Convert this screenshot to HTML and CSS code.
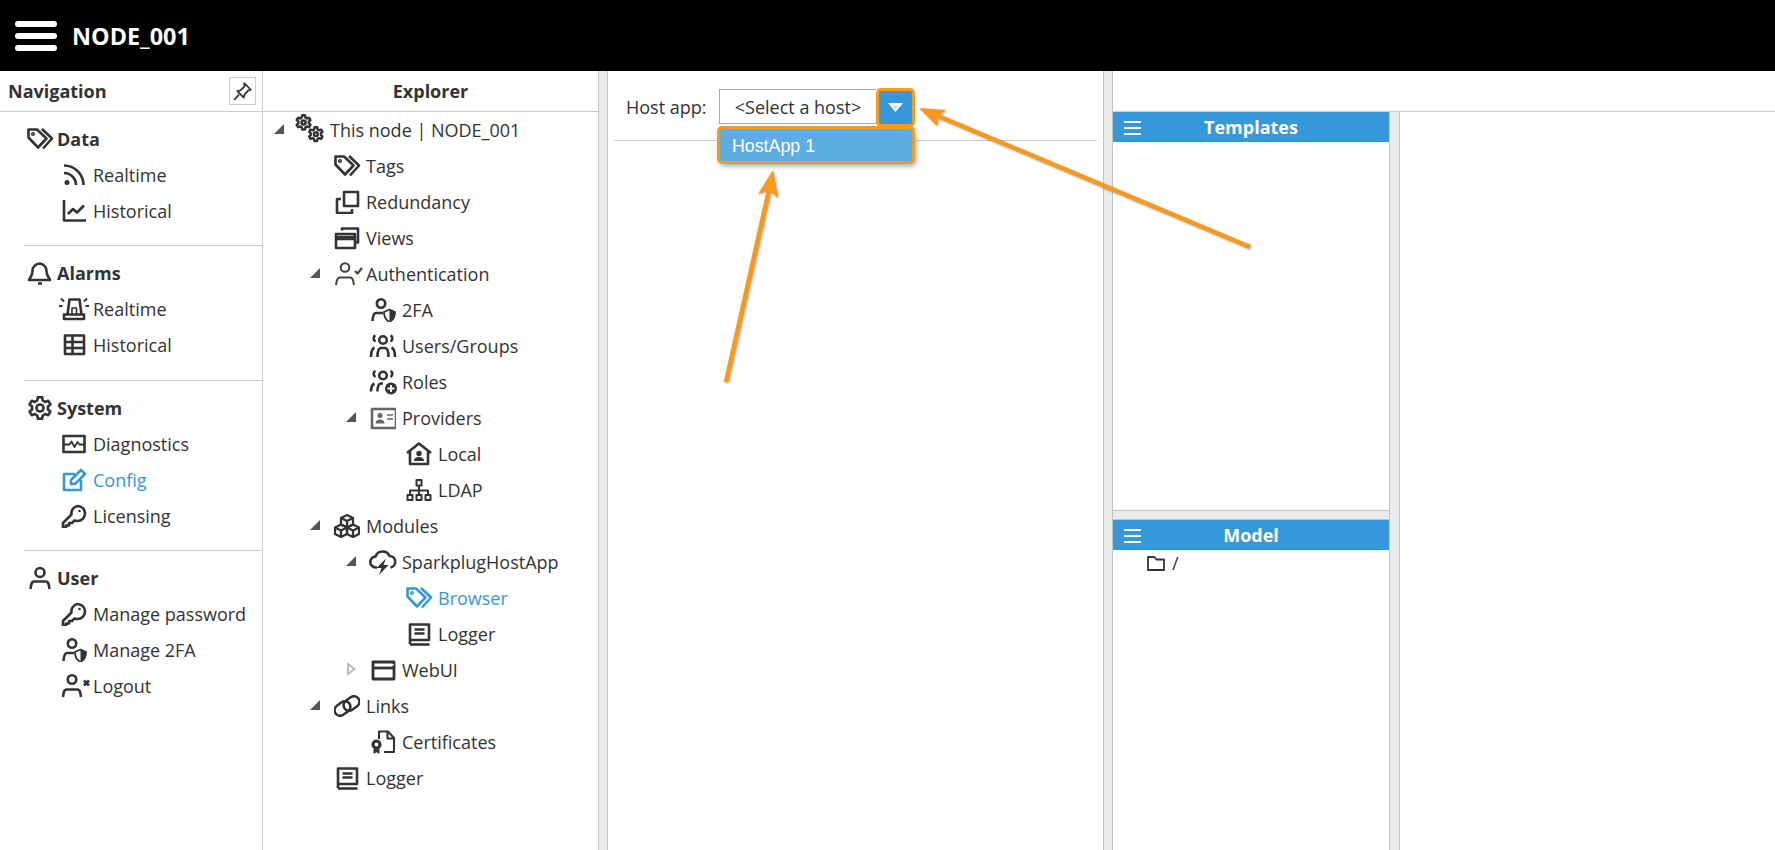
FILE: index.html
```html
<!DOCTYPE html>
<html lang="en">
<head>
<meta charset="utf-8">
<title>NODE_001</title>
<link rel="stylesheet" href="styles.css">
</head>
<body>
<svg class="defs" aria-hidden="true">
  <defs>
    <polygon id="gear" points="10.9,1.2 15.1,1.2 15.7,4.5 18.1,5.9 21.3,4.8 23.4,8.4 20.9,10.6 20.9,13.4 23.4,15.6 21.3,19.2 18.1,18.1 15.7,19.5 15.1,22.8 10.9,22.8 10.3,19.5 7.9,18.1 4.7,19.2 2.6,15.6 5.1,13.4 5.1,10.6 2.6,8.4 4.7,4.8 7.9,5.9 10.3,4.5"/>
    <symbol id="i-tags" viewBox="0 0 26 24" overflow="visible"><path d="M1.500 2.500h8.500l9.500 9-8.500 9L1.500 10.500z"/><circle cx="6" cy="7" r="1.300" stroke-width="1.500"/><path d="M15 2l10 9.500-9 10"/></symbol>
    <symbol id="i-rss" viewBox="0 0 26 24"><circle cx="6" cy="19.500" r="2.500" fill="currentColor" stroke="none"/><path d="M3 10a12 12 0 0 1 12 12M3 2.500a19.500 19.500 0 0 1 19.500 19.500"/></symbol>
    <symbol id="i-chart" viewBox="0 0 26 24"><path d="M3 1v20.500h22"/><path d="M7 15l5-5 4 3.500 7-7"/></symbol>
    <symbol id="i-bell" viewBox="0 0 26 24"><path d="M13 2.500a7.500 7.500 0 0 0-7.500 7.500c0 6-3.500 7.500-3.500 9h21c0-1.500-3.500-3-3.500-9A7.500 7.500 0 0 0 13 2.500z"/><path d="M11 22.500h4"/></symbol>
    <symbol id="i-siren" viewBox="0 0 26 24" overflow="visible"><path d="M3 17.500h20v4.500H3z"/><path d="M6.500 17.500l2-15h10l2 15"/><path d="M11 17v-6h4.500v6" stroke-width="1.600"/><path d="M-2 9h3.500M24.500 9H28M0 1.500l3 3M26 1.500l-3 3" stroke-width="2"/></symbol>
    <symbol id="i-table" viewBox="0 0 26 24"><rect x="4" y="2.500" width="19" height="18.500"/><path d="M4 9h19M4 15h19M11.500 2.500V21"/></symbol>
    <symbol id="i-monitor" viewBox="0 0 26 24"><rect x="2.500" y="4" width="21" height="16"/><path d="M2.500 12.500h6l2-3 3 5.500 3-5 2 2.500h5" stroke-width="1.800"/></symbol>
    <symbol id="i-edit" viewBox="0 0 26 24"><path d="M20 12v10H3V6h11"/><path d="M10 16v-4l10-10 4 4-10 10z"/></symbol>
    <symbol id="i-key" viewBox="0 0 26 24"><path d="M16.500 2a7.500 7.500 0 0 1 0 15c-1 0-2-.2-3-.5l-2.500 2.500H8v2.500H5v2H2v-4.500l8.500-8.500A7.500 7.500 0 0 1 16.500 2z"/><circle cx="18.500" cy="7" r="1.300" fill="currentColor" stroke="none"/></symbol>
    <symbol id="i-user" viewBox="0 0 26 24"><circle cx="13" cy="6.500" r="4.500"/><path d="M3.500 23c.5-4 1-7.500 3.500-7.500h12c2.500 0 3 3.500 3.500 7.500"/></symbol>
    <symbol id="i-usershield" viewBox="0 0 26 24"><circle cx="11" cy="5.500" r="4.200"/><path d="M2.500 23c.3-4 .8-8 3.500-8h7"/><path d="M14 14l5.500-2.500L25 14c0 5-1.700 8-5.500 10-3.800-2-5.500-5-5.500-10z" stroke-width="1.800"/><path d="M19.500 11.500L25 14c0 5-1.700 8-5.500 10z" fill="currentColor" stroke="none"/></symbol>
    <symbol id="i-userx" viewBox="0 0 26 24" overflow="visible"><circle cx="11" cy="5.500" r="4.300"/><path d="M2 23c.5-4 1-7.500 3.500-7.500h11c2.500 0 3 3.500 3.500 7.500"/><path d="M23 6.500l5 5M28 6.500l-5 5"/></symbol>
    <symbol id="i-usercheck" viewBox="0 0 26 24" overflow="visible"><circle cx="11" cy="5.500" r="4.300"/><path d="M2 23c.5-4 1-7.500 3.500-7.500h11c2.500 0 3 3.500 3.500 7.500"/><path d="M21 9l2.500 2.500L28 6"/></symbol>
    <symbol id="i-cogs" viewBox="0 0 26 24" overflow="visible"><g transform="translate(-3 -3.500) scale(.66)" stroke-width="3.800"><use href="#gear"/><circle cx="13" cy="12" r="3"/></g><g transform="translate(9.500 8.500) scale(.64)" stroke-width="3.800"><use href="#gear"/><circle cx="13" cy="12" r="3"/></g></symbol>
    <symbol id="i-cog" viewBox="0 0 26 24"><use href="#gear"/><circle cx="13" cy="12" r="3.500"/></symbol>
    <symbol id="i-clone" viewBox="0 0 26 24"><rect x="10" y="2" width="14" height="14"/><path d="M7 9H3v14h15v-4"/></symbol>
    <symbol id="i-restore" viewBox="0 0 26 24"><path d="M8 4.500V2.500h16v14h-3"/><rect x="2" y="8" width="19" height="14"/><path d="M2 12h19" stroke-width="4.500"/></symbol>
    <symbol id="i-users" viewBox="0 0 26 24" overflow="visible"><circle cx="13" cy="6" r="3.800"/><path d="M5.500 1.500C3 2.500 3 6 5.500 7.500M20.500 1.500c2.500 1 2.500 4.500 0 6"/><path d="M7.500 23c0-4 .7-9 3.500-9h4c2.800 0 3.500 5 3.500 9"/><path d="M1 23c0-4 .5-8 3.500-9.500M25 23c0-4-.5-8-3.500-9.500"/></symbol>
    <symbol id="i-usersplus" viewBox="0 0 26 24" overflow="visible"><circle cx="13" cy="5.500" r="3.800"/><path d="M5.500 1C3 2 3 5.500 5.500 7M20.500 1c2.500 1 2.500 4.500 0 6"/><path d="M7.500 21.500c0-3 .7-8 3.500-8h2"/><path d="M1 21.500c0-3 .5-6.500 3.500-8"/><circle cx="21" cy="18.500" r="6" fill="currentColor" stroke="none"/><path d="M21 15v7M17.500 18.500h7" stroke="#fff" stroke-width="1.800"/></symbol>
    <symbol id="i-idcard" viewBox="0 0 26 24"><rect x="2" y="3" width="24" height="19"/><circle cx="10" cy="9.500" r="2.500" fill="currentColor" stroke="none"/><path d="M5.500 17.500c0-3 2-4 4.500-4s4.500 1 4.500 4z" fill="currentColor" stroke="none"/><path d="M17 9h6M17 13h6" stroke-width="1.700"/></symbol>
    <symbol id="i-house" viewBox="0 0 26 24"><path d="M1 11L13 1.500 25 11"/><path d="M4 9v13h18V9"/><circle cx="13" cy="11.500" r="2.700" fill="currentColor" stroke="none"/><path d="M8 19c0-3 2.500-4 5-4s5 1 5 4z" fill="currentColor" stroke="none"/></symbol>
    <symbol id="i-sitemap" viewBox="0 0 26 24" stroke-width="2"><rect x="10.500" y="2" width="5" height="5.500"/><rect x="1.500" y="17" width="5" height="5"/><rect x="10.500" y="17" width="5" height="5"/><rect x="19.500" y="17" width="5" height="5"/><path d="M13 7v10M4 17v-4.500h18V17"/></symbol>
    <symbol id="i-cubes" viewBox="0 0 26 24" stroke-width="2.300"><path d="M13 1l6 3v6.500l-6 3-6-3V4z"/><path d="M7 4l6 3 6-3M13 7v6.500"/><path d="M7 10.500l6 3v6.500l-6 3-6-3v-6.500z"/><path d="M1 13.500l6 3 6-3M7 16.500V23"/><path d="M19 10.500l6 3v6.500l-6 3-6-3v-6.500z"/><path d="M13 13.500l6 3 6-3M19 16.500V23"/></symbol>
    <symbol id="i-cloud" viewBox="0 0 26 24" overflow="visible"><path d="M7 17.500H6A5.500 5.500 0 0 1 5.500 6.500 7.500 7.500 0 0 1 19.500 6 5.800 5.800 0 0 1 20.500 17.500"/><path d="M16 8.500l-9.500 9.500h5L9 25l9.500-10h-5z" fill="currentColor" stroke="none"/></symbol>
    <symbol id="i-book" viewBox="0 0 26 24"><path d="M4 22V2.500h19V18H6a2 2 0 0 0-2 2"/><path d="M4 22.500h19.500"/><path d="M8.500 7.500h10M8.500 11.500h10"/></symbol>
    <symbol id="i-window" viewBox="0 0 26 24" stroke-width="2.800"><rect x="3" y="4" width="21" height="17"/><path d="M3 10h21"/><path d="M5 6.800h19" stroke-width="1" stroke="#fff"/></symbol>
    <symbol id="i-link" viewBox="0 0 26 24" stroke-width="2.500"><rect x="0" y="9" width="17" height="11" rx="5.500" transform="rotate(-36 8.500 14.500)"/><rect x="9" y="4" width="17" height="11" rx="5.500" transform="rotate(-36 17.500 9.500)"/></symbol>
    <symbol id="i-cert" viewBox="0 0 26 24" stroke-width="2.100"><path d="M9 9V1.500h9l6 6.500v14H14"/><path d="M17.500 1.500V8.500H24"/><circle cx="6.500" cy="14.500" r="3.500" stroke-width="3.200"/><path d="M3.500 18.500v5.500l3-1.800 3 1.800v-5.500z" fill="currentColor" stroke="none"/></symbol>
    <symbol id="i-pin" viewBox="0 0 24 24" stroke-width="2"><path d="M14 2.500l7.500 7.500-2.800.8-4.500 4.700-.7 3.500-7.500-7.500 3.500-.7 4.700-4.500z"/><path d="M8 15.500L2.500 21.500"/></symbol>
    <symbol id="i-folder" viewBox="0 0 20 16" stroke-width="1.800"><path d="M2 2h6.500l2 2.500H18V15H2z"/></symbol>
  </defs>
</svg>

<header class="topbar">
  <div class="burger"><span></span><span></span><span></span></div>
  <div class="node-title">NODE_001</div>
</header>

<main class="app">
  <nav class="nav">
    <div class="nav-head">
      <span>Navigation</span>
      <button class="pin" type="button"><svg class="ico pin-ico"><use href="#i-pin"/></svg></button>
    </div>
    <section class="nav-sec">
      <div class="nav-title"><svg class="ico"><use href="#i-tags"/></svg>Data</div>
      <div class="nav-item"><svg class="ico"><use href="#i-rss"/></svg>Realtime</div>
      <div class="nav-item"><svg class="ico"><use href="#i-chart"/></svg>Historical</div>
    </section>
    <section class="nav-sec roomy">
      <div class="nav-title"><svg class="ico"><use href="#i-bell"/></svg>Alarms</div>
      <div class="nav-item"><svg class="ico"><use href="#i-siren"/></svg>Realtime</div>
      <div class="nav-item"><svg class="ico"><use href="#i-table"/></svg>Historical</div>
    </section>
    <section class="nav-sec">
      <div class="nav-title"><svg class="ico"><use href="#i-cog"/></svg>System</div>
      <div class="nav-item"><svg class="ico"><use href="#i-monitor"/></svg>Diagnostics</div>
      <div class="nav-item active"><svg class="ico"><use href="#i-edit"/></svg>Config</div>
      <div class="nav-item"><svg class="ico"><use href="#i-key"/></svg>Licensing</div>
    </section>
    <section class="nav-sec last">
      <div class="nav-title"><svg class="ico"><use href="#i-user"/></svg>User</div>
      <div class="nav-item"><svg class="ico"><use href="#i-key"/></svg>Manage password</div>
      <div class="nav-item"><svg class="ico"><use href="#i-usershield"/></svg>Manage 2FA</div>
      <div class="nav-item"><svg class="ico"><use href="#i-userx"/></svg>Logout</div>
    </section>
  </nav>

  <aside class="explorer">
    <div class="explorer-head">Explorer</div>
    <div class="tree">
      <div class="row l0"><i class="tog open"></i><svg class="ico"><use href="#i-cogs"/></svg>This node | NODE_001</div>
      <div class="row l1"><i class="tog"></i><svg class="ico"><use href="#i-tags"/></svg>Tags</div>
      <div class="row l1"><i class="tog"></i><svg class="ico"><use href="#i-clone"/></svg>Redundancy</div>
      <div class="row l1"><i class="tog"></i><svg class="ico"><use href="#i-restore"/></svg>Views</div>
      <div class="row l1"><i class="tog open"></i><svg class="ico thin"><use href="#i-usercheck"/></svg>Authentication</div>
      <div class="row l2"><i class="tog"></i><svg class="ico"><use href="#i-usershield"/></svg>2FA</div>
      <div class="row l2"><i class="tog"></i><svg class="ico"><use href="#i-users"/></svg>Users/Groups</div>
      <div class="row l2"><i class="tog"></i><svg class="ico"><use href="#i-usersplus"/></svg>Roles</div>
      <div class="row l2"><i class="tog open"></i><svg class="ico grey"><use href="#i-idcard"/></svg>Providers</div>
      <div class="row l3"><i class="tog"></i><svg class="ico"><use href="#i-house"/></svg>Local</div>
      <div class="row l3"><i class="tog"></i><svg class="ico"><use href="#i-sitemap"/></svg>LDAP</div>
      <div class="row l1"><i class="tog open"></i><svg class="ico"><use href="#i-cubes"/></svg>Modules</div>
      <div class="row l2"><i class="tog open"></i><svg class="ico"><use href="#i-cloud"/></svg>SparkplugHostApp</div>
      <div class="row l3 active"><i class="tog"></i><svg class="ico"><use href="#i-tags"/></svg>Browser</div>
      <div class="row l3"><i class="tog"></i><svg class="ico"><use href="#i-book"/></svg>Logger</div>
      <div class="row l2"><i class="tog closed"></i><svg class="ico"><use href="#i-window"/></svg>WebUI</div>
      <div class="row l1"><i class="tog open"></i><svg class="ico"><use href="#i-link"/></svg>Links</div>
      <div class="row l2"><i class="tog"></i><svg class="ico"><use href="#i-cert"/></svg>Certificates</div>
      <div class="row l1"><i class="tog"></i><svg class="ico"><use href="#i-book"/></svg>Logger</div>
    </div>
  </aside>

  <div class="vsplit"></div>

  <section class="host-pane">
    <div class="host-row">
      <label class="host-label">Host app:</label>
      <div class="combo">
        <div class="combo-value">&lt;Select a host&gt;</div>
        <button class="combo-btn" type="button"><i class="caret"></i></button>
        <div class="combo-menu">HostApp 1</div>
      </div>
    </div>
    <div class="host-rule"></div>
  </section>

  <div class="vsplit"></div>

  <section class="right">
    <div class="right-head"></div>
    <div class="right-body">
      <div class="stack">
        <div class="panel top">
          <div class="panel-head"><div class="mini-burger"><span></span><span></span><span></span></div>Templates</div>
        </div>
        <div class="hsplit"></div>
        <div class="panel bottom">
          <div class="panel-head"><div class="mini-burger"><span></span><span></span><span></span></div>Model</div>
          <div class="folder"><svg class="folder-ico"><use href="#i-folder"/></svg>/</div>
        </div>
      </div>
      <div class="vsplit wide"></div>
      <div class="rest"></div>
    </div>
  </section>
</main>

<svg class="arrows" viewBox="0 0 1775 850" aria-hidden="true">
  <path d="M1250 247L938 116"/>
  <polygon points="919,108 946,110 938,116 937,126"/>
  <path d="M726 382L769 190"/>
  <polygon points="773,170 778,198 769,190 758,194"/>
</svg>
</body>
</html>
```
FILE: styles.css
```css
* { box-sizing: border-box; }
html, body { margin: 0; height: 100%; }
body {
  width: 1775px;
  height: 850px;
  overflow: hidden;
  position: relative;
  display: flex;
  flex-direction: column;
  background: #fff;
  color: #333;
  font: 18px "Open Sans", sans-serif;
}
.defs { position: absolute; width: 0; height: 0; }

.ico {
  width: 26px;
  height: 24px;
  flex: none;
  overflow: visible;
  fill: none;
  stroke: currentColor;
  stroke-width: 2.6;
  stroke-linejoin: round;
  stroke-linecap: butt;
}
.ico.thin { color: #444; stroke-width: 2.1; }
.ico.grey { color: #666; }

.topbar {
  height: 71px;
  flex: none;
  background: #000;
  color: #fff;
  display: flex;
  align-items: center;
  padding-left: 15px;
}
.burger { width: 42px; display: flex; flex-direction: column; gap: 6px; margin-right: 15px; }
.burger span { height: 6px; background: #fff; border-radius: 3px; }
.node-title { font-size: 23.4px; font-weight: 700; }

.app { flex: 1; display: flex; min-height: 0; }

.nav { width: 263px; flex: none; border-right: 1px solid #ccc; }
.nav-head {
  height: 41px;
  border-bottom: 1px solid #ccc;
  display: flex;
  align-items: center;
  justify-content: space-between;
  padding: 0 6px 0 8px;
  font-weight: 700;
}
.pin {
  width: 27px;
  height: 28px;
  padding: 0;
  background: #fff;
  border: 1px solid #ccc;
  display: flex;
  align-items: center;
  justify-content: center;
  color: #333;
}
.pin-ico { width: 21px; height: 21px; }

.nav-sec { margin-left: 24px; padding: 9px 0 16px; border-bottom: 1px solid #ccc; }
.nav-sec.roomy { padding-bottom: 17px; }
.nav-sec.last { border-bottom: 0; }
.nav-title { height: 36px; display: flex; align-items: center; gap: 4px; padding-left: 3px; font-weight: 700; }
.nav-item { height: 36px; display: flex; align-items: center; gap: 6px; padding-left: 37px; }
.nav-item.active, .row.active { color: #3498db; }

.explorer { width: 335px; flex: none; display: flex; flex-direction: column; }
.explorer-head {
  height: 41px;
  flex: none;
  border-bottom: 1px solid #ccc;
  display: flex;
  align-items: center;
  justify-content: center;
  font-weight: 700;
}
.row { height: 36px; display: flex; align-items: center; white-space: nowrap; }
.row.l0 { padding-left: 11px; }
.row.l1 { padding-left: 47px; }
.row.l2 { padding-left: 83px; }
.row.l3 { padding-left: 119px; }
.tog { width: 10px; height: 10px; flex: none; margin-right: 14px; margin-top: -2px; }
.row .ico { margin-right: 6px; }
.tog.open { background: #555; clip-path: polygon(100% 0, 100% 100%, 0 100%); }
.tog.closed {
  width: 9px;
  height: 14px;
  margin-left: 1px;
  margin-right: 14px;
  background: #bbb;
  clip-path: polygon(0 0, 100% 50%, 0 100%, 0 0, 2px 4px, 2px 10px, 6px 7px, 2px 4px);
}

.vsplit {
  width: 10px;
  flex: none;
  background: #ebebeb;
  border-left: 1px solid #c4c4c4;
  border-right: 1px solid #c4c4c4;
}
.vsplit.wide { width: 11px; }

.host-pane { width: 495px; flex: none; }
.host-row { height: 69px; display: flex; align-items: flex-start; padding: 18px 0 0 18px; }
.host-label { width: 93px; height: 35px; line-height: 37px; }
.combo { position: relative; display: flex; }
.combo-value {
  width: 157px;
  height: 35px;
  border: 1px solid #aaa;
  border-right: 0;
  text-align: center;
  line-height: 35px;
}
.combo-btn {
  width: 33px;
  height: 33px;
  margin: 2px 0 0 3px;
  padding: 0;
  border: 0;
  border-radius: 2px;
  background: #3498db;
  box-shadow: 0 0 0 3px #f7991c;
  display: flex;
  align-items: center;
  justify-content: center;
}
.caret {
  position: relative;
  width: 15px;
  height: 9px;
  background: #fff;
  clip-path: polygon(0 0, 100% 0, 50% 100%);
}
.caret::after {
  content: "";
  position: absolute;
  left: 5px;
  top: 3px;
  width: 5px;
  height: 3px;
  background: #a9d4f0;
  clip-path: polygon(0 0, 100% 0, 50% 100%);
}
.combo-menu {
  position: absolute;
  top: 40px;
  left: 1px;
  width: 192px;
  height: 32px;
  padding-left: 12px;
  background: #5dade2;
  color: #fff;
  font: 17.8px/34px "Liberation Sans", Arial, sans-serif;
  border-radius: 2px;
  box-shadow: 0 0 0 3px #f7991c, 2px 3px 5px 2px rgba(0, 0, 0, .35);
}
.host-rule { height: 1px; margin: 0 6px; background: #ccc; }

.right { flex: 1; min-width: 0; display: flex; flex-direction: column; }
.right-head { height: 41px; flex: none; border-bottom: 1px solid #ccc; }
.right-body { flex: 1; display: flex; min-height: 0; }
.stack { width: 276px; flex: none; display: flex; flex-direction: column; }
.panel.top { height: 398px; flex: none; }
.panel.bottom { flex: 1; }
.hsplit {
  height: 10px;
  flex: none;
  background: #ebebeb;
  border-top: 1px solid #c4c4c4;
  border-bottom: 1px solid #c4c4c4;
}
.panel-head {
  height: 30px;
  position: relative;
  background: #3498db;
  color: #fff;
  font-weight: 700;
  text-align: center;
  line-height: 31px;
}
.mini-burger {
  position: absolute;
  left: 11px;
  top: 9px;
  width: 17px;
  display: flex;
  flex-direction: column;
  gap: 4px;
}
.mini-burger span { height: 2px; background: #fff; }
.folder { display: flex; align-items: center; gap: 6px; height: 26px; padding-left: 33px; }
.folder-ico { width: 20px; height: 16px; fill: none; stroke: currentColor; stroke-linejoin: round; }
.rest { flex: 1; }

.arrows {
  position: absolute;
  left: 0;
  top: 0;
  width: 1775px;
  height: 850px;
  pointer-events: none;
  fill: #f7991c;
  stroke: none;
  filter: drop-shadow(1px 1px 1px rgba(0, 0, 0, .35));
}
.arrows path { fill: none; stroke: #f7991c; stroke-width: 4.5; }
```
